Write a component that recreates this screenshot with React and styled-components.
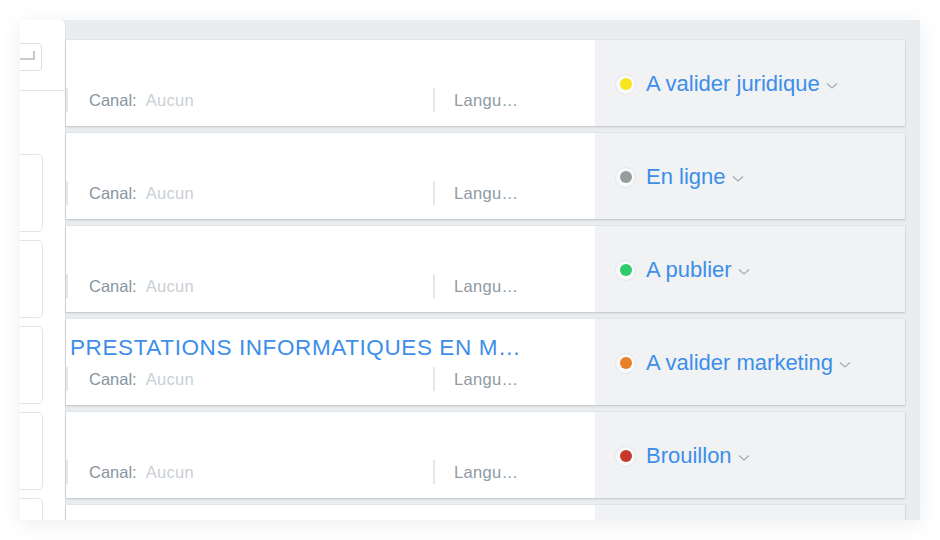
import React from 'react';
import styled, { createGlobalStyle } from 'styled-components';

const GlobalStyle = createGlobalStyle`
  html, body {
    margin: 0;
    padding: 0;
    background: #ffffff;
    font-family: "Liberation Sans", Arial, sans-serif;
  }
`;

// Outer page and the framed screenshot
const Page = styled.div`
  width: 940px;
  height: 540px;
  padding: 20px;
  box-sizing: border-box;
`;

const Frame = styled.div`
  width: 900px;
  height: 500px;
  display: flex;
  background: #eaedef;
  overflow: hidden;
  box-shadow: 0 4px 22px rgba(0, 0, 0, 0.07);
`;

// Left sidebar (clipped)
const Sidebar = styled.div`
  width: 45px;
  flex-shrink: 0;
  background: #ffffff;
  border-right: 1px solid #dde2e5;
  border-top-right-radius: 5px;
  overflow: hidden;
  display: flex;
  flex-direction: column;
`;

const SidebarTop = styled.div`
  height: 71px;
  flex-shrink: 0;
  border-bottom: 1px solid #e2e6e9;
  padding-top: 23px;
  box-sizing: border-box;
`;

const KeyBox = styled.div`
  width: 32px;
  height: 28px;
  margin-left: -10px;
  box-sizing: border-box;
  border: 1.5px solid #d9dee2;
  border-radius: 4px;
  display: flex;
  align-items: center;
  justify-content: flex-end;
  padding-right: 2px;
`;

const CardStack = styled.div`
  margin-top: 63px;
  flex-shrink: 0;
  display: flex;
  flex-direction: column;
  gap: 8px;
`;

const SideCard = styled.div`
  width: 40px;
  height: 78px;
  margin-left: -17px;
  flex-shrink: 0;
  box-sizing: border-box;
  border: 1.5px solid #e1e5e8;
  border-radius: 5px;
  background: #ffffff;
`;

// Main list of rows
const List = styled.div`
  flex: 1;
  display: flex;
  flex-direction: column;
  gap: 7px;
  padding: 20px 15px 0 0;
`;

const Row = styled.div`
  height: 86px;
  flex-shrink: 0;
  display: flex;
  background: #ffffff;
  box-shadow: 0 1px 2px rgba(0, 0, 0, 0.16), 0 0 0 1px rgba(0, 0, 0, 0.025);
`;

const Main = styled.div`
  flex: 1;
  min-width: 0;
  padding-top: 16px;
  display: flex;
  flex-direction: column;
`;

const Title = styled.div`
  height: 26px;
  line-height: 26px;
  padding-left: 4px;
  font-size: 22.5px;
  letter-spacing: 0.6px;
  color: #3d8ee9;
  white-space: nowrap;
`;

const Meta = styled.div`
  margin-top: 6px;
  height: 24px;
  display: flex;
  align-items: center;
`;

const MetaCol = styled.div`
  height: 24px;
  width: ${(p) => p.$width}px;
  box-sizing: border-box;
  border-left: 2px solid #e4e8eb;
  padding-left: ${(p) => p.$pad}px;
  display: flex;
  align-items: center;
  font-size: 16.5px;
  white-space: nowrap;
`;

const Label = styled.span`
  color: #8795a1;
  margin-right: 9px;
`;

const Value = styled.span`
  color: #c9d0d6;
  letter-spacing: 0.3px;
`;

const Lang = styled.span`
  color: #8e9aa4;
  letter-spacing: 0.3px;
`;

const Status = styled.div`
  width: 310px;
  flex-shrink: 0;
  background: #f0f2f4;
  display: flex;
  align-items: center;
  padding: 2px 0 0 20px;
  box-sizing: border-box;
`;

const DotRing = styled.span`
  width: 21px;
  height: 21px;
  box-sizing: border-box;
  border-radius: 50%;
  background: #f8f9fa;
  border: 1px solid #e3e6e9;
  display: flex;
  align-items: center;
  justify-content: center;
  margin-right: 10px;
`;

const Dot = styled.span`
  width: 12px;
  height: 12px;
  border-radius: 50%;
  background: ${(p) => p.$color};
`;

const StatusText = styled.span`
  font-size: 22px;
  color: #3d8ee9;
  margin-right: 6px;
`;

const Chevron = () => (
  <svg width="12" height="8" viewBox="0 0 12 8" style={{ marginTop: 4 }}>
    <polyline points="1,1.5 6,6 11,1.5" fill="none" stroke="#a3adb5" strokeWidth="1.3" />
  </svg>
);

const ReturnIcon = () => (
  <svg width="26" height="16" viewBox="0 0 26 16">
    <path d="M21 2v8H2" fill="none" stroke="#b3bcc4" strokeWidth="1.6" />
    <polyline points="5,7 2,10 5,13" fill="none" stroke="#b3bcc4" strokeWidth="1.6" />
  </svg>
);

const rows = [
  { title: '', status: 'A valider juridique', color: '#f9e51e' },
  { title: '', status: 'En ligne', color: '#969e9c' },
  { title: '', status: 'A publier', color: '#2ecb6b' },
  { title: 'PRESTATIONS INFORMATIQUES EN M…', status: 'A valider marketing', color: '#e8802a' },
  { title: '', status: 'Brouillon', color: '#c6392b' },
  { title: '', status: '', color: '', partial: true },
];

const App = () => (
  <>
    <GlobalStyle />
    <Page>
      <Frame>
        <Sidebar>
          <SidebarTop>
            <KeyBox>
              <ReturnIcon />
            </KeyBox>
          </SidebarTop>
          <CardStack>
            {[0, 1, 2, 3, 4].map((i) => (
              <SideCard key={i} />
            ))}
          </CardStack>
        </Sidebar>
        <List>
          {rows.map((row, i) => (
            <Row key={i}>
              <Main>
                {!row.partial && (
                  <>
                    <Title>{row.title}</Title>
                    <Meta>
                      <MetaCol $width={367} $pad={21}>
                        <Label>Canal:</Label>
                        <Value>Aucun</Value>
                      </MetaCol>
                      <MetaCol $width={162} $pad={19}>
                        <Lang>Langu…</Lang>
                      </MetaCol>
                    </Meta>
                  </>
                )}
              </Main>
              <Status>
                {row.status && (
                  <>
                    <DotRing>
                      <Dot $color={row.color} />
                    </DotRing>
                    <StatusText>{row.status}</StatusText>
                    <Chevron />
                  </>
                )}
              </Status>
            </Row>
          ))}
        </List>
      </Frame>
    </Page>
  </>
);

export default App;
